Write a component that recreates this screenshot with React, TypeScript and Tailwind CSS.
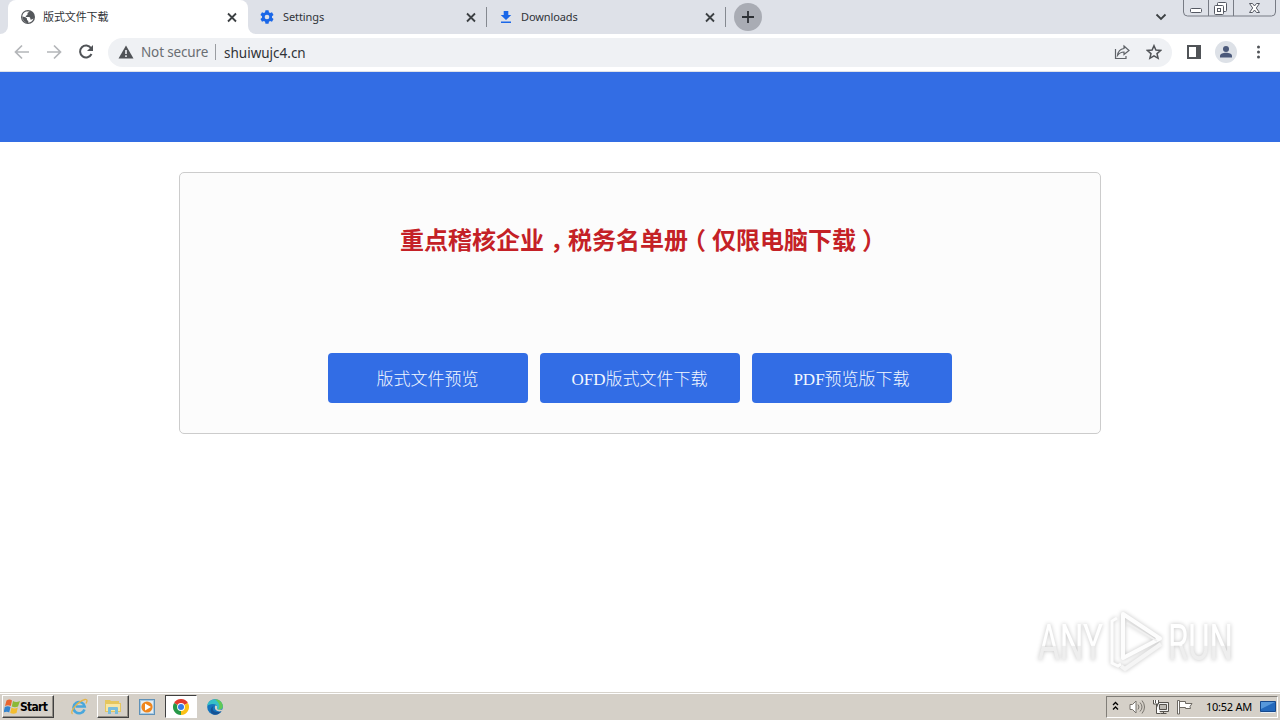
import type { ReactNode } from 'react';

const ui = "font-['Noto_Sans','Noto_Sans_CJK_SC',sans-serif]";

function Close() {
  return (
    <svg className="h-4 w-4 shrink-0" viewBox="0 0 16 16" stroke="#3c4043" strokeWidth="1.8">
      <path d="M4 4.500l8 8M12 4.500l-8 8" />
    </svg>
  );
}

function Globe() {
  return (
    <svg className="h-4 w-4 shrink-0" viewBox="0 0 16 16">
      <circle cx="8" cy="8" r="7" fill="#54575b" />
      <path d="M9.500 2.500L7.500 4v1.800L5.800 7v1h3.500l1 1v1.500h1.500l1.700-1c-.8 2.500-2.700 4-5.200 4.200V12L7 11V9.500L5.500 8.300 2.500 7.500c-.2 3 1.800 5.500 4.500 6.200C1 13 .7 4.300 6 2.600z" fill="#fff" />
    </svg>
  );
}

function Tab({ icon, children, active = false }: { icon: ReactNode; children: ReactNode; active?: boolean }) {
  return (
    <div className={`flex h-[34px] items-center pl-3 pr-2 ${active ? 'w-60 rounded-t-lg bg-white' : 'w-[239px]'}`}>
      {icon}
      <span className="ml-[7px] flex-1 whitespace-nowrap text-[11px] leading-4 tracking-[-0.1px] text-[#303338]">{children}</span>
      <Close />
    </div>
  );
}

function WindowControls() {
  return (
    <svg className="ml-[15px] h-[18px] w-[94px] self-start" viewBox="0 0 94 18" fill="none" stroke="#777b84">
      <path d="M.5 0v12q0 4 4 4h84q4 0 4-4V0M25.500 0v16M50.500 0v16" />
      <rect x="7.500" y="8.500" width="11" height="4" rx="1" fill="#fff" stroke="#555963" />
      <rect x="34.500" y="2.500" width="9" height="9" rx="1" fill="#fff" stroke="#555963" />
      <rect x="31.500" y="5.500" width="9" height="9" rx="1" fill="#fff" stroke="#555963" />
      <rect x="34.500" y="8.500" width="3" height="3" stroke="#555963" />
      <path d="M66.500 3.500h3l2 2.500 2-2.500h3l-3.200 4.500 3.200 4.500h-3L71.500 10l-2 2.500h-3L69.700 8z" fill="#fff" stroke="#555963" />
    </svg>
  );
}

function TabStrip() {
  return (
    <div className="flex h-[34px] items-center bg-[#dee1e8]">
      <div className="flex w-2 self-stretch bg-white">
        <div className="w-2 rounded-br-lg bg-[#dee1e8]" />
      </div>
      <Tab active icon={<Globe />}>版式文件下载</Tab>
      <div className="flex h-[34px] bg-white">
        <div className="flex rounded-bl-lg bg-[#dee1e8]">
          <Tab
            icon={
              <svg className="-ml-px mr-px h-4 w-4 shrink-0" viewBox="0 0 24 24" fill="#1a67e8">
                <path fillRule="evenodd" d="M9.700 2h4.600l.6 3 1.700 1 2.900-1 2.300 4-2.300 2v2l2.300 2-2.300 4-2.900-1-1.700 1-.6 3H9.700l-.6-3-1.700-1-2.900 1-2.300-4 2.300-2v-2L2.200 9l2.300-4 2.900 1 1.700-1zM12 8.500a3.500 3.500 0 100 7 3.500 3.500 0 000-7z" />
              </svg>
            }
          >
            Settings
          </Tab>
        </div>
      </div>
      <div className="-ml-px h-5 w-px bg-[#858990]" />
      <Tab
        icon={
          <svg className="-ml-px h-4 w-4 shrink-0" viewBox="0 0 16 16" fill="#1a67e8">
            <path d="M5.700 2h4.600v4h3L8 11 2.700 6h3zM3 12.500h10V14H3z" />
          </svg>
        }
      >
        Downloads
      </Tab>
      <div className="-ml-px h-5 w-px bg-[#858990]" />
      <div className="ml-2 flex h-7 w-7 items-center justify-center rounded-full bg-[#a9acb4]">
        <svg className="h-4 w-4" viewBox="0 0 16 16" stroke="#2d3035" strokeWidth="1.8">
          <path d="M8 2v12M2 8h12" />
        </svg>
      </div>
      <div className="flex-1" />
      <svg className="h-4 w-4" viewBox="0 0 16 16" fill="none" stroke="#3c4043" strokeWidth="1.800">
        <path d="M4.500 5.500L9 10l4.500-4.500" />
      </svg>
      <WindowControls />
      <div className="w-[3px]" />
    </div>
  );
}

function Toolbar() {
  return (
    <div className="flex h-[38px] items-center border-b border-[#dfe2e8] bg-white pb-px">
      <svg className="ml-3 h-5 w-[88px]" viewBox="0 0 88 20" fill="none" stroke="#b4b6b9" strokeWidth="1.700">
        <path d="M17 10H4M10 3.500L3.500 10l6.500 6.500M35 10h13M42 3.500l6.500 6.500-6.500 6.500" />
        <g stroke="#505357" strokeWidth="2">
          <path d="M79 6A6 6 0 1079.500 12" />
          <path d="M81 3v6h-6z" fill="#505357" stroke="none" />
        </g>
      </svg>
      <div className="ml-2 flex h-[29px] w-[1064px] items-center rounded-full bg-[#eff1f4] pl-[10px] pr-[10px]">
        <svg className="h-4 w-4" viewBox="0 0 16 16">
          <path d="M8 1.500l7.500 13H.5z" fill="#505357" />
          <path d="M8 6v4M8 11.200v1.700" stroke="#eff1f4" strokeWidth="1.600" />
        </svg>
        <span className="ml-[7px] w-[67px] whitespace-nowrap pt-px text-[13.500px] tracking-[-0.15px] text-[#6a6e73]">Not secure</span>
        <div className="ml-[7px] h-4 w-px bg-[#9a9da1]" />
        <span className="ml-2 flex-1 pt-[2px] text-[13.500px] text-[#303337]">shuiwujc4.cn</span>
        <svg className="h-4 w-4" viewBox="0 0 16 16" fill="none" stroke="#5f6368" strokeWidth="1.200">
          <path d="M1.500 5v9.500H12V12M10 2l5 4.500-5 4V8C7 8 5 9.500 3.500 11.500 4 7.500 6 5 10 4.500z" />
        </svg>
        <svg className="ml-4 h-4 w-4" viewBox="0 0 16 16" fill="none" stroke="#505357" strokeWidth="1.500">
          <path d="M8 1.700l1.900 4.400 4.700.4-3.600 3.100 1.100 4.700L8 11.800l-4.100 2.500L5 9.600 1.400 6.500l4.700-.4z" />
        </svg>
      </div>
      <svg className="ml-[14px] h-4 w-4" viewBox="0 0 16 16">
        <path fillRule="evenodd" d="M1 1h14v14H1zM3 3v10h7V3z" fill="#505357" />
      </svg>
      <svg className="ml-[13px] h-[22px] w-[22px]" viewBox="0 0 22 22">
        <circle cx="11" cy="11" r="11" fill="#dde1e7" />
        <circle cx="11" cy="8" r="3" fill="#4b597a" />
        <path d="M5 16.500V15c0-4.300 12-4.300 12 0v1.500z" fill="#4b597a" />
      </svg>
      <svg className="ml-[13px] h-4 w-4" viewBox="0 0 16 16" fill="#505357">
        <circle cx="8.500" cy="3" r="1.500" /><circle cx="8.500" cy="8" r="1.500" /><circle cx="8.500" cy="13" r="1.500" />
      </svg>
    </div>
  );
}

function ActionButton({ children }: { children: ReactNode }) {
  return (
    <button className="h-[50px] w-[200px] whitespace-nowrap rounded bg-[#326de5] pr-px pt-[3px] font-['Liberation_Serif','Noto_Sans_CJK_SC',serif] text-[17px] font-light leading-6 text-[#f3f8ff]">
      {children}
    </button>
  );
}

function Punct({ children }: { children: ReactNode }) {
  return <span className="inline-block w-6 text-center [font-feature-settings:'halt']">{children}</span>;
}

function Watermark() {
  return (
    <svg
      className="absolute left-[1024px] top-[600px] h-[84px] w-[224px] drop-shadow-[0_0_2px_rgba(0,0,0,0.24)]"
      viewBox="-4 -2 224 84"
    >
      <defs>
        <linearGradient id="markFill" x1="0" y1="0" x2="0" y2="1">
          <stop offset="0.540" stopColor="#ffffff" />
          <stop offset="0.560" stopColor="#eeeeee" />
        </linearGradient>
      </defs>
      <g fill="url(#markFill)" fontFamily="Liberation Sans Narrow, Roboto, sans-serif" fontSize="50">
        <text x="10" y="58" textLength="65" lengthAdjust="spacingAndGlyphs">ANY</text>
        <text x="140" y="58" textLength="65" lengthAdjust="spacingAndGlyphs">RUN</text>
      </g>
      <g fill="none" stroke="#fdfdfd" strokeWidth="4">
        <path d="M95 56V12l37 24.500z" strokeLinejoin="round" />
        <path d="M89 16l-5 3v42l6 3 3-2" strokeWidth="3" />
        <path d="M133 42L97 67l-4-3" strokeWidth="4" stroke="#f5f5f5" />
        <path d="M99 21l30 18" strokeWidth="2" stroke="#f0f0f0" />
      </g>
    </svg>
  );
}

function ChromeIcon() {
  return (
    <svg className="h-4 w-4" viewBox="0 0 16 16">
      <path d="M8 8L1.070 4A8 8 0 0114.930 4z" fill="#e33b2e" />
      <path d="M8 8l6.930-4A8 8 0 018 16z" fill="#fbc116" />
      <path d="M8 8v8A8 8 0 011.070 4z" fill="#279847" />
      <circle cx="8" cy="8" r="3.900" fill="#fff" />
      <circle cx="8" cy="8" r="3" fill="#367be8" />
    </svg>
  );
}

const raised = 'border border-t-white border-l-white border-r-[#404040] border-b-[#404040] shadow-[inset_-1px_-1px_0_#918d86]';

function Taskbar() {
  return (
    <div className="flex h-7 items-center border-t border-[#d7d3cc] bg-[#d5d0c8] pl-[2px] shadow-[inset_0_1px_0_#ffffff]">
      <div className={`flex h-[23px] w-[52px] items-center ${raised}`}>
        <svg className="ml-px h-4 w-4" viewBox="0 0 16 16">
          <path d="M2.500 1.500q3-2 5.500 0L6.800 7Q4 5.500 1 7z" fill="#e9652f" />
          <path d="M9 2q3 2 7 0L14 7.500Q11 9 7.800 7.500z" fill="#8bb936" />
          <path d="M.8 8q3-1.500 5.700 0L5.200 13.500Q3 12-.5 13.500z" fill="#3484ce" />
          <path d="M7.500 8.500q3 2 6.300 0L12.500 14q-3 1.500-6.300 0z" fill="#f3bd2f" />
        </svg>
        <span className="font-['DejaVu_Sans_Condensed','DejaVu_Sans',sans-serif] text-[12px] font-bold leading-4 tracking-[-0.7px] text-black">Start</span>
      </div>
      <svg className="ml-4 h-[18px] w-[18px]" viewBox="0 0 18 18" fill="none">
        <path d="M14.500 11.500a5.700 5.700 0 11.200-3H5.500" stroke="#49a7dc" strokeWidth="2.500" />
        <path d="M2.500 16C-1 14 8 3 15 1.500c3-.3 2 2 1 4" stroke="#e5b447" strokeWidth="1.300" />
      </svg>
      <div className={`ml-[9px] flex h-[23px] w-8 items-center justify-center ${raised}`}>
        <svg className="h-4 w-[18px]" viewBox="0 0 18 16">
          <path d="M1 3V1h5l1 1h8v2h2v9H1z" fill="#e5c65d" />
          <path d="M2 5h14v7H2z" fill="#f7e6a3" />
          <path d="M4 15V9q0-1 1-1h8q1 0 1 1v6h-3v-4H7v4z" fill="#79bddc" />
        </svg>
      </div>
      <svg className="ml-[10px] h-4 w-4" viewBox="0 0 16 16">
        <rect x=".5" y=".5" width="15" height="15" fill="#a8cae3" stroke="#5e91b8" />
        <rect x="2" y="2" width="12" height="12" fill="#e5edf1" />
        <circle cx="8" cy="8" r="5.600" fill="#ef861d" />
        <path d="M6 4.500l6 3.500-6 3.500z" fill="#fff" />
      </svg>
      <div className="ml-[10px] flex h-[23px] w-8 items-center justify-center border border-b-white border-l-[#404040] border-r-white border-t-[#404040] bg-white">
        <ChromeIcon />
      </div>
      <svg className="ml-[10px] h-4 w-4" viewBox="0 0 16 16">
        <circle cx="8" cy="8" r="7.800" fill="#1474bd" />
        <path d="M.3 7C1-2 15-1 15.800 7c.3 4-4.500 4.500-6.300 3C11.500 7 9 5 6 5 3 5 1 6 .3 7z" fill="#36bfc7" />
        <path d="M8 .2c5 0 7.600 3.500 7.800 6.800.2 3-3 4-5 3.500C14 8 12 3 8 .2z" fill="#62c956" />
        <path d="M6.500 7c-2 3 0 6 3.500 6 2 0 3.500-.5 4.500-1.300A8 8 0 018 15.800C3 15.500 2 9 6.500 7z" fill="#155295" />
        <path d="M8 7c1-1 3 0 2 2-.5 1.500 2 2.500 6 1.300l-1 1.700c-4 1.500-8-1-7-5z" fill="#d5d0c8" />
      </svg>
      <div className="flex-1" />
      <div className="mr-[2px] flex h-[22px] w-[172px] items-center border border-b-white border-l-[#817e78] border-r-white border-t-[#817e78]">
        <svg className="ml-[5px] h-3 w-2" viewBox="0 0 8 12" fill="none" stroke="#000" strokeWidth="1.300">
          <path d="M1 4l2.500-2.500L6 4M1 8.500L3.500 6 6 8.500" />
        </svg>
        <svg className="ml-[9px] h-4 w-4" viewBox="0 0 16 16" fill="none" stroke="#77736d">
          <path d="M1 5.500h2.500L7 2v12l-3.500-3.500H1z" fill="#fff" />
          <path d="M9 5.500q2 2.500 0 5M11 3.500q4 4.500 0 9M13 1.500q5 6.500 0 13" />
        </svg>
        <svg className="ml-2 h-4 w-4" viewBox="0 0 16 16" fill="none" stroke="#55524d">
          <path d="M4.500 3.500h11v9h-11zM7.500 14.500h6M10.500 12.500v2" fill="#eee" />
          <path d="M6.500 5.500h7v5h-7z" fill="#bbb8b2" />
          <path d="M.5 1v4h5V1M2.500 1v3M3.500 5v9.500h4" fill="#fff" />
        </svg>
        <svg className="ml-2 h-4 w-4" viewBox="0 0 16 16" fill="#fff" stroke="#6d6963">
          <path d="M.5 15V1.500h2V15zM2.500 2.500h6v2H15l-2 3 .5 2H8.500v-1h-6z" />
        </svg>
        <span className="ml-[13px] whitespace-nowrap font-['Noto_Sans',sans-serif] text-[11px] leading-4 tracking-[-0.25px] text-black">10:52 AM</span>
        <svg className="ml-auto mr-px h-4 w-4" viewBox="0 0 16 16">
          <path d="M.5 2.500h15v10H.5z" fill="#2469bc" stroke="#16498d" />
          <path d="M1 3h14L1 10z" fill="#5798db" />
          <path d="M1 13h14v1H1z" fill="#e5edf4" />
        </svg>
      </div>
    </div>
  );
}

export default function App() {
  return (
    <div className={`relative flex h-[720px] w-[1280px] flex-col overflow-hidden bg-white ${ui}`}>
      <TabStrip />
      <Toolbar />
      <header className="h-[70px] bg-[#336de4]" />
      <main className="flex flex-1 items-start justify-center pt-[30px]">
        <section className="ml-px mr-px flex h-[262px] w-[922px] flex-col items-center rounded-[5px] border border-[#cccccc] bg-[#fcfcfc]">
          <h1 className="mt-12 h-9 w-[480px] whitespace-nowrap font-['Noto_Sans_CJK_SC',sans-serif] text-2xl font-bold leading-9 text-[#c42126]">
            重点稽核企业<Punct>，</Punct>税务名单册<Punct>（</Punct>仅限电脑下载<Punct>）</Punct>
          </h1>
          <div className="mt-24 flex gap-3">
            <ActionButton>版式文件预览</ActionButton>
            <ActionButton>OFD版式文件下载</ActionButton>
            <ActionButton>PDF预览版下载</ActionButton>
          </div>
        </section>
      </main>
      <Watermark />
      <Taskbar />
    </div>
  );
}
